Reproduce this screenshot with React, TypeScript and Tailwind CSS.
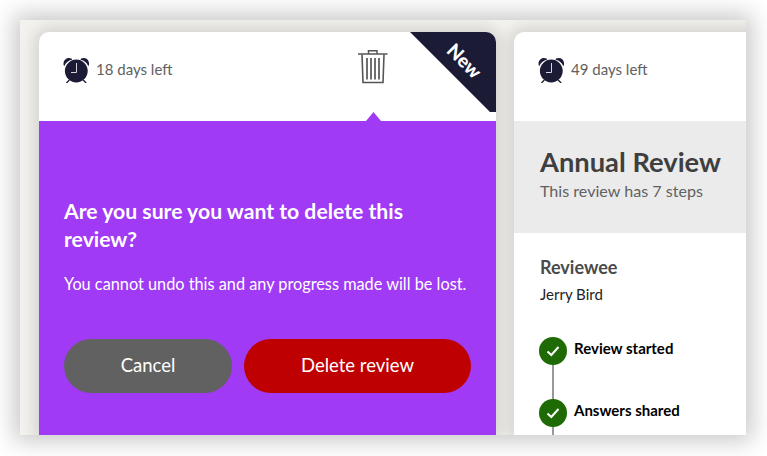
function AlarmClock() {
  return (
    <svg width="26" height="26" viewBox="0 0 26 26" className="shrink-0">
      <circle cx="13.3" cy="14" r="11.4" fill="#1b1b36" />
      <path d="M0.8 8.6C-0.6 3.6 3.6 -0.6 8.6 1.6L9 2.8C5.4 3.6 2.6 5.8 1.4 9Z" fill="#1b1b36" />
      <path d="M25.8 8.6C27.2 3.6 23 -0.6 18 1.6L17.6 2.8C21.2 3.6 24 5.8 25.2 9Z" fill="#1b1b36" />
      <path d="M6.4 23L3.4 26M20.2 23L23.2 26" stroke="#1b1b36" strokeWidth="1.3" />
      <path d="M13.5 6V15.5H8" stroke="#d6d6de" strokeWidth="1" fill="none" />
    </svg>
  )
}

function Trash() {
  return (
    <svg width="30" height="34" viewBox="0 0 30 34" fill="none" stroke="#555" className="block">
      <path d="M0 4H29.5" strokeWidth="1.6" />
      <path d="M10.5 4V0.8H19V4" strokeWidth="1.5" />
      <path d="M4 4.5L5 32.5H25L26 4.5" strokeWidth="1.6" />
      <path d="M9 8V29.5M13 8V29.5M17 8V29.5M21 8V29.5" strokeWidth="1.7" />
    </svg>
  )
}

function Check() {
  return (
    <span className="flex h-[28px] w-[28px] shrink-0 items-center justify-center rounded-full bg-[#1e6b05]">
      <svg width="16" height="16" viewBox="0 0 16 16" fill="none" stroke="#fff" strokeWidth="2">
        <path d="M2.5 8.5L6.3 12L13.5 4" />
      </svg>
    </span>
  )
}

function DaysLeft({ days }: { days: number }) {
  return (
    <div className="flex items-center gap-[7px]">
      <AlarmClock />
      <span className="pb-[2px] text-[15px] text-[#616161]">{days} days left</span>
    </div>
  )
}

export default function App() {
  return (
    <div className="h-[456px] w-[767px] overflow-hidden bg-white pl-[20px] pt-[20px] font-['Lato','Noto_Sans',sans-serif]">
      <div className="flex h-[415px] w-[726px] gap-[18px] overflow-hidden bg-[#f3f2ee] pl-[19px] pt-[12px] shadow-[0_0_22px_6px_rgba(0,0,0,0.22)]">
        <div className="relative flex w-[457px] shrink-0 flex-col overflow-hidden rounded-t-[10px] bg-white shadow-[0_0_16px_4px_rgba(0,0,0,0.14)]">
          <div className="relative flex h-[89px] shrink-0 items-start pl-[24px] pt-[25px]">
            <DaysLeft days={18} />
            <div className="absolute left-[319px] top-[18px]">
              <Trash />
            </div>
            <div className="absolute left-[327px] top-[80px] h-[9px] w-[15px] bg-[#a03af5] [clip-path:polygon(50%_0,100%_100%,0_100%)]" />
          </div>
          <div className="absolute right-0 top-0 h-[80px] w-[86px] bg-[#1b1b36] [clip-path:polygon(0_0,100%_0,100%_100%,93%_100%)]" />
          <div className="absolute right-[11px] top-[19px] rotate-45 text-[19px] font-black leading-none text-white">New</div>
          <div className="flex-1 bg-[#a03af5] px-[25px] pt-[76px] text-white">
            <h2 className="text-[21.2px] font-bold leading-[28px]">Are you sure you want to delete this review?</h2>
            <p className="mt-[19px] whitespace-nowrap text-[16.3px] leading-[24px]">You cannot undo this and any progress made will be lost.</p>
            <div className="mt-[43px] flex gap-[12px]">
              <button className="h-[54px] w-[168px] rounded-full bg-[#616161] text-[18.5px]">Cancel</button>
              <button className="h-[54px] w-[227px] rounded-full bg-[#bf0000] text-[18.5px]">Delete review</button>
            </div>
          </div>
        </div>

        <div className="flex w-[300px] shrink-0 flex-col overflow-hidden rounded-t-[10px] bg-white shadow-[0_0_16px_4px_rgba(0,0,0,0.14)]">
          <div className="h-[89px] shrink-0 pl-[24px] pt-[25px]">
            <DaysLeft days={49} />
          </div>
          <div className="h-[112px] shrink-0 whitespace-nowrap bg-[#ebebeb] pl-[26px] pt-[24px] text-[#3f3f3f]">
            <h2 className="text-[27.3px] font-bold leading-[34px]">Annual Review</h2>
            <p className="mt-[2px] text-[16.1px] leading-[20px] text-[#616161]">This review has 7 steps</p>
          </div>
          <div className="pl-[25px] pt-[22px]">
            <h3 className="pl-[1px] text-[18px] font-bold leading-[24px] text-[#4a4a4a]">Reviewee</h3>
            <p className="mt-[5px] pl-[1px] text-[15px] leading-[20px] text-[#222]">Jerry Bird</p>
            <div className="relative mt-[33px]">
              <div className="absolute left-[13px] top-[20px] h-[100px] w-[2px] bg-[#999]" />
              <div className="relative flex items-start gap-[7px]">
                <Check />
                <span className="text-[15px] font-bold leading-[22px] text-black">Review started</span>
              </div>
              <div className="relative mt-[34px] flex items-start gap-[7px]">
                <Check />
                <span className="text-[15px] font-bold leading-[22px] text-black">Answers shared</span>
              </div>
            </div>
          </div>
        </div>
      </div>
    </div>
  )
}
